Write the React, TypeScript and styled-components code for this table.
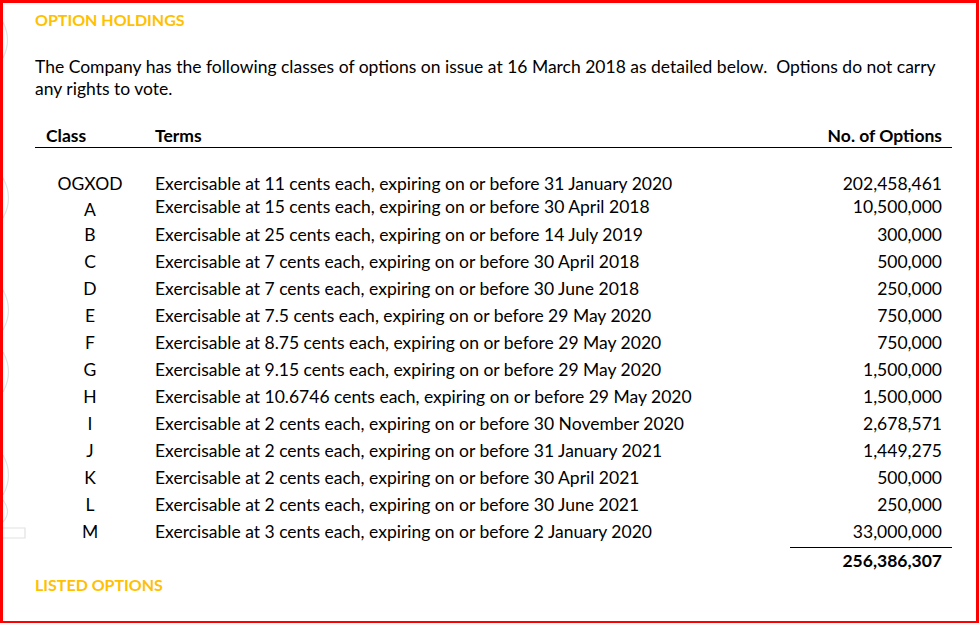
import React from "react";
import styled, { createGlobalStyle } from "styled-components";

const Global = createGlobalStyle`
  html, body { margin: 0; padding: 0; background: #fff; }
  body { font-family: Lato, "Liberation Sans", sans-serif; color: #000; }
`;

const Frame = styled.div`
  box-sizing: border-box;
  width: 979px;
  height: 623px;
  border-style: solid;
  border-color: #ff0000;
  border-width: 3px 3px 2px 3px;
  padding: 6px 24px 0 32px;
  overflow: hidden;
  position: relative;
`;

const Heading = styled.div<{ $gap?: number }>`
  color: #ffc000;
  font-weight: 700;
  font-size: 16px;
  line-height: 22px;
  margin-top: ${(p) => p.$gap ?? 0}px;
`;

const Para = styled.p`
  margin: 25px 0 0 0;
  font-size: 17.5px;
  line-height: 22px;
  width: 906px;
`;

const Table = styled.div`
  margin-top: 26px;
  width: 917px;
  display: grid;
  grid-template-columns: 110px 1fr 162px;
  font-size: 17.5px;
`;

const HeadCell = styled.div<{ $align?: string; $pl?: number }>`
  font-weight: 700;
  line-height: 20px;
  padding: 0 10px 1px ${(p) => p.$pl ?? 0}px;
  text-align: ${(p) => p.$align ?? "left"};
  border-bottom: 1.5px solid #000;
  white-space: nowrap;
`;

const Cell = styled.div<{ $align?: string; $h: number; $pl?: number; $shift?: number }>`
  height: ${(p) => p.$h}px;
  line-height: 22px;
  display: flex;
  align-items: flex-end;
  justify-content: ${(p) => p.$align ?? "flex-start"};
  padding: 0 10px 0 ${(p) => p.$pl ?? 0}px;
  position: relative;
  top: ${(p) => p.$shift ?? 0}px;
  white-space: nowrap;
`;

const TotalCell = styled.div`
  grid-column: 3;
  margin-top: 4px;
  border-top: 1.5px solid #000;
  font-weight: 700;
  text-align: right;
  padding: 2px 10px 0 0;
  line-height: 22px;
`;

const Artifacts = styled.svg`
  position: absolute;
  left: -3px;
  top: -3px;
  pointer-events: none;
`;

const rows: [string, string, string][] = [
  ["OGXOD", "Exercisable at 11 cents each, expiring on or before 31 January 2020", "202,458,461"],
  ["A", "Exercisable at 15 cents each, expiring on or before 30 April 2018", "10,500,000"],
  ["B", "Exercisable at 25 cents each, expiring on or before 14 July 2019", "300,000"],
  ["C", "Exercisable at 7 cents each, expiring on or before 30 April 2018", "500,000"],
  ["D", "Exercisable at 7 cents each, expiring on or before 30 June 2018", "250,000"],
  ["E", "Exercisable at 7.5 cents each, expiring on or before 29 May 2020", "750,000"],
  ["F", "Exercisable at 8.75 cents each, expiring on or before 29 May 2020", "750,000"],
  ["G", "Exercisable at 9.15 cents each, expiring on or before 29 May 2020", "1,500,000"],
  ["H", "Exercisable at 10.6746 cents each, expiring on or before 29 May 2020", "1,500,000"],
  ["I", "Exercisable at 2 cents each, expiring on or before 30 November 2020", "2,678,571"],
  ["J", "Exercisable at 2 cents each, expiring on or before 31 January 2021", "1,449,275"],
  ["K", "Exercisable at 2 cents each, expiring on or before 30 April 2021", "500,000"],
  ["L", "Exercisable at 2 cents each, expiring on or before 30 June 2021", "250,000"],
  ["M", "Exercisable at 3 cents each, expiring on or before 2 January 2020", "33,000,000"],
];

export default function App() {
  return (
    <>
      <Global />
      <Frame>
        <Artifacts width="30" height="623" viewBox="0 0 30 623">
          <g fill="none" stroke="#e2e2e2" strokeWidth="1.2">
            <path d="M3 22 Q12 40 3 58" />
            <path d="M3 178 Q14 198 3 218" />
            <path d="M3 290 Q14 310 3 330" />
            <path d="M3 352 Q14 372 3 392" />
            <path d="M3 455 Q14 475 3 495" />
            <path d="M3 500 Q12 512 3 522" />
            <path d="M3 528 H25 V538 H3" />
          </g>
        </Artifacts>
        <Heading>OPTION HOLDINGS</Heading>
        <Para>
          The Company has the following classes of options on issue at 16 March 2018 as detailed below.&nbsp; Options do not carry any rights to vote.
        </Para>
        <Table>
          <HeadCell $pl={11}>Class</HeadCell>
          <HeadCell $pl={10}>Terms</HeadCell>
          <HeadCell $align="right">No. of Options</HeadCell>
          {rows.map(([c, t, n], i) => {
            const h = i === 0 ? 47 : i === 1 ? 23 : i === 2 ? 28 : 27;
            return (
              <React.Fragment key={c}>
                <Cell $h={h} $align="center" $pl={10} $shift={i === 1 ? 3 : 0}>{c}</Cell>
                <Cell $h={h} $pl={10}>{t}</Cell>
                <Cell $h={h} $align="flex-end">{n}</Cell>
              </React.Fragment>
            );
          })}
          <TotalCell>256,386,307</TotalCell>
        </Table>
        <Heading $gap={2}>LISTED OPTIONS</Heading>
      </Frame>
    </>
  );
}
